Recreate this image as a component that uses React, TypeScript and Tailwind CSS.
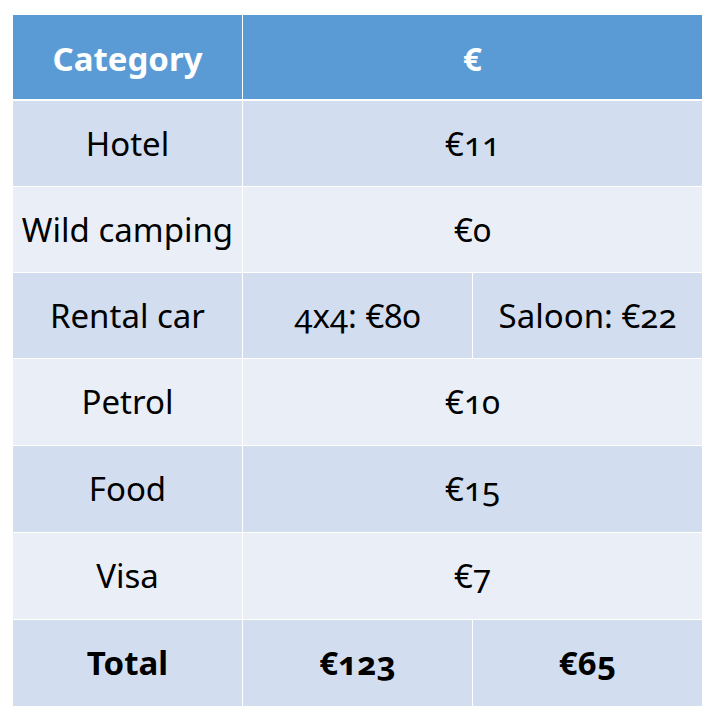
import React from "react";

const font = { fontFamily: '"Noto Sans", "Open Sans", sans-serif' };

type Row = { label: string; a: string; b?: string; bold?: boolean };

const rows: Row[] = [
  { label: "Hotel", a: "€11" },
  { label: "Wild camping", a: "€0" },
  { label: "Rental car", a: "4x4: €80", b: "Saloon: €22" },
  { label: "Petrol", a: "€10" },
  { label: "Food", a: "€15" },
  { label: "Visa", a: "€7" },
  { label: "Total", a: "€123", b: "€65", bold: true },
];

export default function App() {
  return (
    <div className="w-[718px] h-[718px] bg-white pt-[15px] pl-[13px]" style={font}>
      <div className="grid grid-cols-[229px_229px_229px] gap-px bg-white w-[689px] text-[33px] text-black oldstyle-nums">
        <div className="h-[84px] pt-[3px] bg-[#5b9bd5] text-white font-bold flex items-center justify-center">Category</div>
        <div className="col-span-2 h-[84px] pt-[3px] bg-[#5b9bd5] text-white font-bold flex items-center justify-center">€</div>
        <div className="col-span-3 h-0 bg-white"></div>
        {rows.map((r, i) => {
          const bg = i % 2 === 0 ? "bg-[#d2deef]" : "bg-[#eaeff7]";
          const w = r.bold ? "font-bold" : "font-normal";
          const h = i >= 3 ? "h-[86px]" : "h-[85px]";
          return (
            <React.Fragment key={r.label}>
              <div className={`${h} ${bg} ${w} flex items-center justify-center`}>{r.label}</div>
              {r.b ? (
                <>
                  <div className={`${h} ${bg} ${w} flex items-center justify-center`}>{r.a}</div>
                  <div className={`${h} ${bg} ${w} flex items-center justify-center`}>{r.b}</div>
                </>
              ) : (
                <div className={`col-span-2 ${h} ${bg} ${w} flex items-center justify-center`}>{r.a}</div>
              )}
            </React.Fragment>
          );
        })}
      </div>
    </div>
  );
}
